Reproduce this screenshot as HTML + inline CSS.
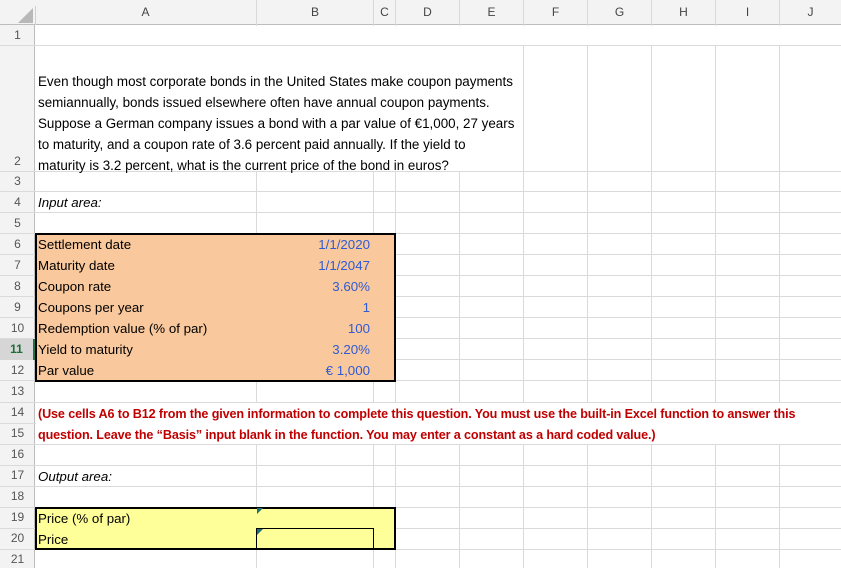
<!DOCTYPE html>
<html><head><meta charset="utf-8">
<style>
*{margin:0;padding:0;box-sizing:border-box}
body{width:841px;height:568px;overflow:hidden;background:#fff;font-family:"Liberation Sans",sans-serif;font-size:13.3px;color:#000;position:relative}
.a{position:absolute}
.h{position:absolute;left:0;width:841px;height:1px;background:#dadada}
.v{position:absolute;top:25px;height:543px;width:1px;background:#dadada}
.ch{position:absolute;top:0;height:25px;line-height:25px;text-align:center;color:#444;font-size:12px}
.rn{position:absolute;left:0;width:35px;text-align:center;color:#555;font-size:12px;height:21px;line-height:21px}
.t{position:absolute;white-space:nowrap;height:21px;line-height:23px}
.b{color:#2f5bd3;text-align:right;width:100px;left:270px}
</style></head><body>
<div class="a" style="left:0;top:0;width:841px;height:25px;background:#f3f3f3;border-bottom:1px solid #bdbdbd"></div>
<div class="a" style="left:0;top:25px;width:35px;height:543px;background:#f3f3f3;border-right:1px solid #bdbdbd"></div>
<svg class="a" style="left:17px;top:8px" width="16" height="16"><polygon points="16,0 16,15 1,15" fill="#b8b8b8"/></svg>
<div class="a" style="left:35px;top:6px;width:1px;height:19px;background:#d0d0d0"></div>
<div class="h" style="top:45px"></div><div class="h" style="top:171px"></div><div class="h" style="top:191px"></div>
<div class="h" style="top:212px"></div><div class="h" style="top:233px"></div><div class="h" style="top:254px"></div>
<div class="h" style="top:275px"></div><div class="h" style="top:296px"></div><div class="h" style="top:317px"></div>
<div class="h" style="top:338px"></div><div class="h" style="top:359px"></div><div class="h" style="top:380px"></div>
<div class="h" style="top:402px"></div><div class="h" style="top:423px"></div><div class="h" style="top:444px"></div>
<div class="h" style="top:465px"></div><div class="h" style="top:486px"></div><div class="h" style="top:507px"></div>
<div class="h" style="top:528px"></div><div class="h" style="top:549px"></div>
<div class="v" style="left:256px"></div><div class="v" style="left:373px"></div><div class="v" style="left:395px"></div>
<div class="v" style="left:459px"></div><div class="v" style="left:523px"></div><div class="v" style="left:587px"></div>
<div class="v" style="left:651px"></div><div class="v" style="left:715px"></div><div class="v" style="left:779px"></div>
<div class="a" style="left:36px;top:26px;width:805px;height:19px;background:#fff"></div>
<div class="a" style="left:36px;top:46px;width:486px;height:125px;background:#fff"></div>
<div class="a" style="left:36px;top:403px;width:805px;height:41px;background:#fff"></div>
<div class="ch" style="left:35px;width:221px">A</div>
<div class="ch" style="left:256px;width:117px;border-left:1px solid #d8d8d8">B</div>
<div class="ch" style="left:373px;width:22px;border-left:1px solid #d8d8d8">C</div>
<div class="ch" style="left:395px;width:64px;border-left:1px solid #d8d8d8">D</div>
<div class="ch" style="left:459px;width:64px;border-left:1px solid #d8d8d8">E</div>
<div class="ch" style="left:523px;width:64px;border-left:1px solid #d8d8d8">F</div>
<div class="ch" style="left:587px;width:64px;border-left:1px solid #d8d8d8">G</div>
<div class="ch" style="left:651px;width:64px;border-left:1px solid #d8d8d8">H</div>
<div class="ch" style="left:715px;width:64px;border-left:1px solid #d8d8d8">I</div>
<div class="ch" style="left:779px;width:62px;border-left:1px solid #d8d8d8">J</div>
<div class="rn" style="top:25px">1</div>
<div class="rn" style="top:151px">2</div>
<div class="rn" style="top:171px">3</div>
<div class="rn" style="top:192px">4</div>
<div class="rn" style="top:213px">5</div>
<div class="rn" style="top:234px">6</div>
<div class="rn" style="top:255px">7</div>
<div class="rn" style="top:276px">8</div>
<div class="rn" style="top:297px">9</div>
<div class="rn" style="top:318px">10</div>
<div class="rn" style="top:339px;background:#d6d6d6;color:#1e6e3a;font-weight:bold;border-right:2px solid #217346">11</div>
<div class="rn" style="top:360px">12</div>
<div class="rn" style="top:381px">13</div>
<div class="rn" style="top:402px">14</div>
<div class="rn" style="top:423px">15</div>
<div class="rn" style="top:444px">16</div>
<div class="rn" style="top:465px">17</div>
<div class="rn" style="top:486px">18</div>
<div class="rn" style="top:507px">19</div>
<div class="rn" style="top:528px">20</div>
<div class="rn" style="top:549px">21</div>
<div class="a" style="left:38px;top:71px;line-height:21px;font-size:13.4px;white-space:nowrap">
Even though most corporate bonds in the United States make coupon payments<br>
semiannually, bonds issued elsewhere often have annual coupon payments.<br>
Suppose a German company issues a bond with a par value of €1,000, 27 years<br>
to maturity, and a coupon rate of 3.6 percent paid annually. If the yield to<br>
maturity is 3.2 percent, what is the current price of the bond in euros?
</div>
<div class="t" style="left:38px;top:191px;font-style:italic">Input area:</div>
<div class="a" style="left:35px;top:233px;width:361px;height:149px;background:#f9c89c;border:2px solid #000"></div>
<div class="t" style="left:38px;top:233px">Settlement date</div><div class="t b" style="top:233px">1/1/2020</div>
<div class="t" style="left:38px;top:254px">Maturity date</div><div class="t b" style="top:254px">1/1/2047</div>
<div class="t" style="left:38px;top:275px">Coupon rate</div><div class="t b" style="top:275px">3.60%</div>
<div class="t" style="left:38px;top:296px">Coupons per year</div><div class="t b" style="top:296px">1</div>
<div class="t" style="left:38px;top:317px">Redemption value (% of par)</div><div class="t b" style="top:317px">100</div>
<div class="t" style="left:38px;top:338px">Yield to maturity</div><div class="t b" style="top:338px">3.20%</div>
<div class="t" style="left:38px;top:359px">Par value</div><div class="t b" style="top:359px">€ 1,000</div>
<div class="a" style="left:38px;top:404px;line-height:21px;color:#c00000;font-weight:bold;font-size:12.6px;white-space:nowrap;letter-spacing:-0.12px">
(Use cells A6 to B12 from the given information to complete this question. You must use the built-in Excel function to answer this<br>
question. Leave the “Basis” input blank in the function. You may enter a constant as a hard coded value.)
</div>
<div class="t" style="left:38px;top:465px;font-style:italic">Output area:</div>
<div class="a" style="left:35px;top:507px;width:361px;height:43px;background:#ffff99;border:2px solid #000"></div>
<div class="a" style="left:256px;top:528px;width:118px;height:21px;border:1px solid #000"></div>
<svg class="a" style="left:257px;top:508px" width="7" height="7"><polygon points="0,0 6,0 0,6" fill="#1d6f76"/></svg>
<svg class="a" style="left:257px;top:529px" width="7" height="7"><polygon points="0,0 6,0 0,6" fill="#1d6f76"/></svg>
<div class="t" style="left:38px;top:507px">Price (% of par)</div>
<div class="t" style="left:38px;top:528px">Price</div>
</body></html>
